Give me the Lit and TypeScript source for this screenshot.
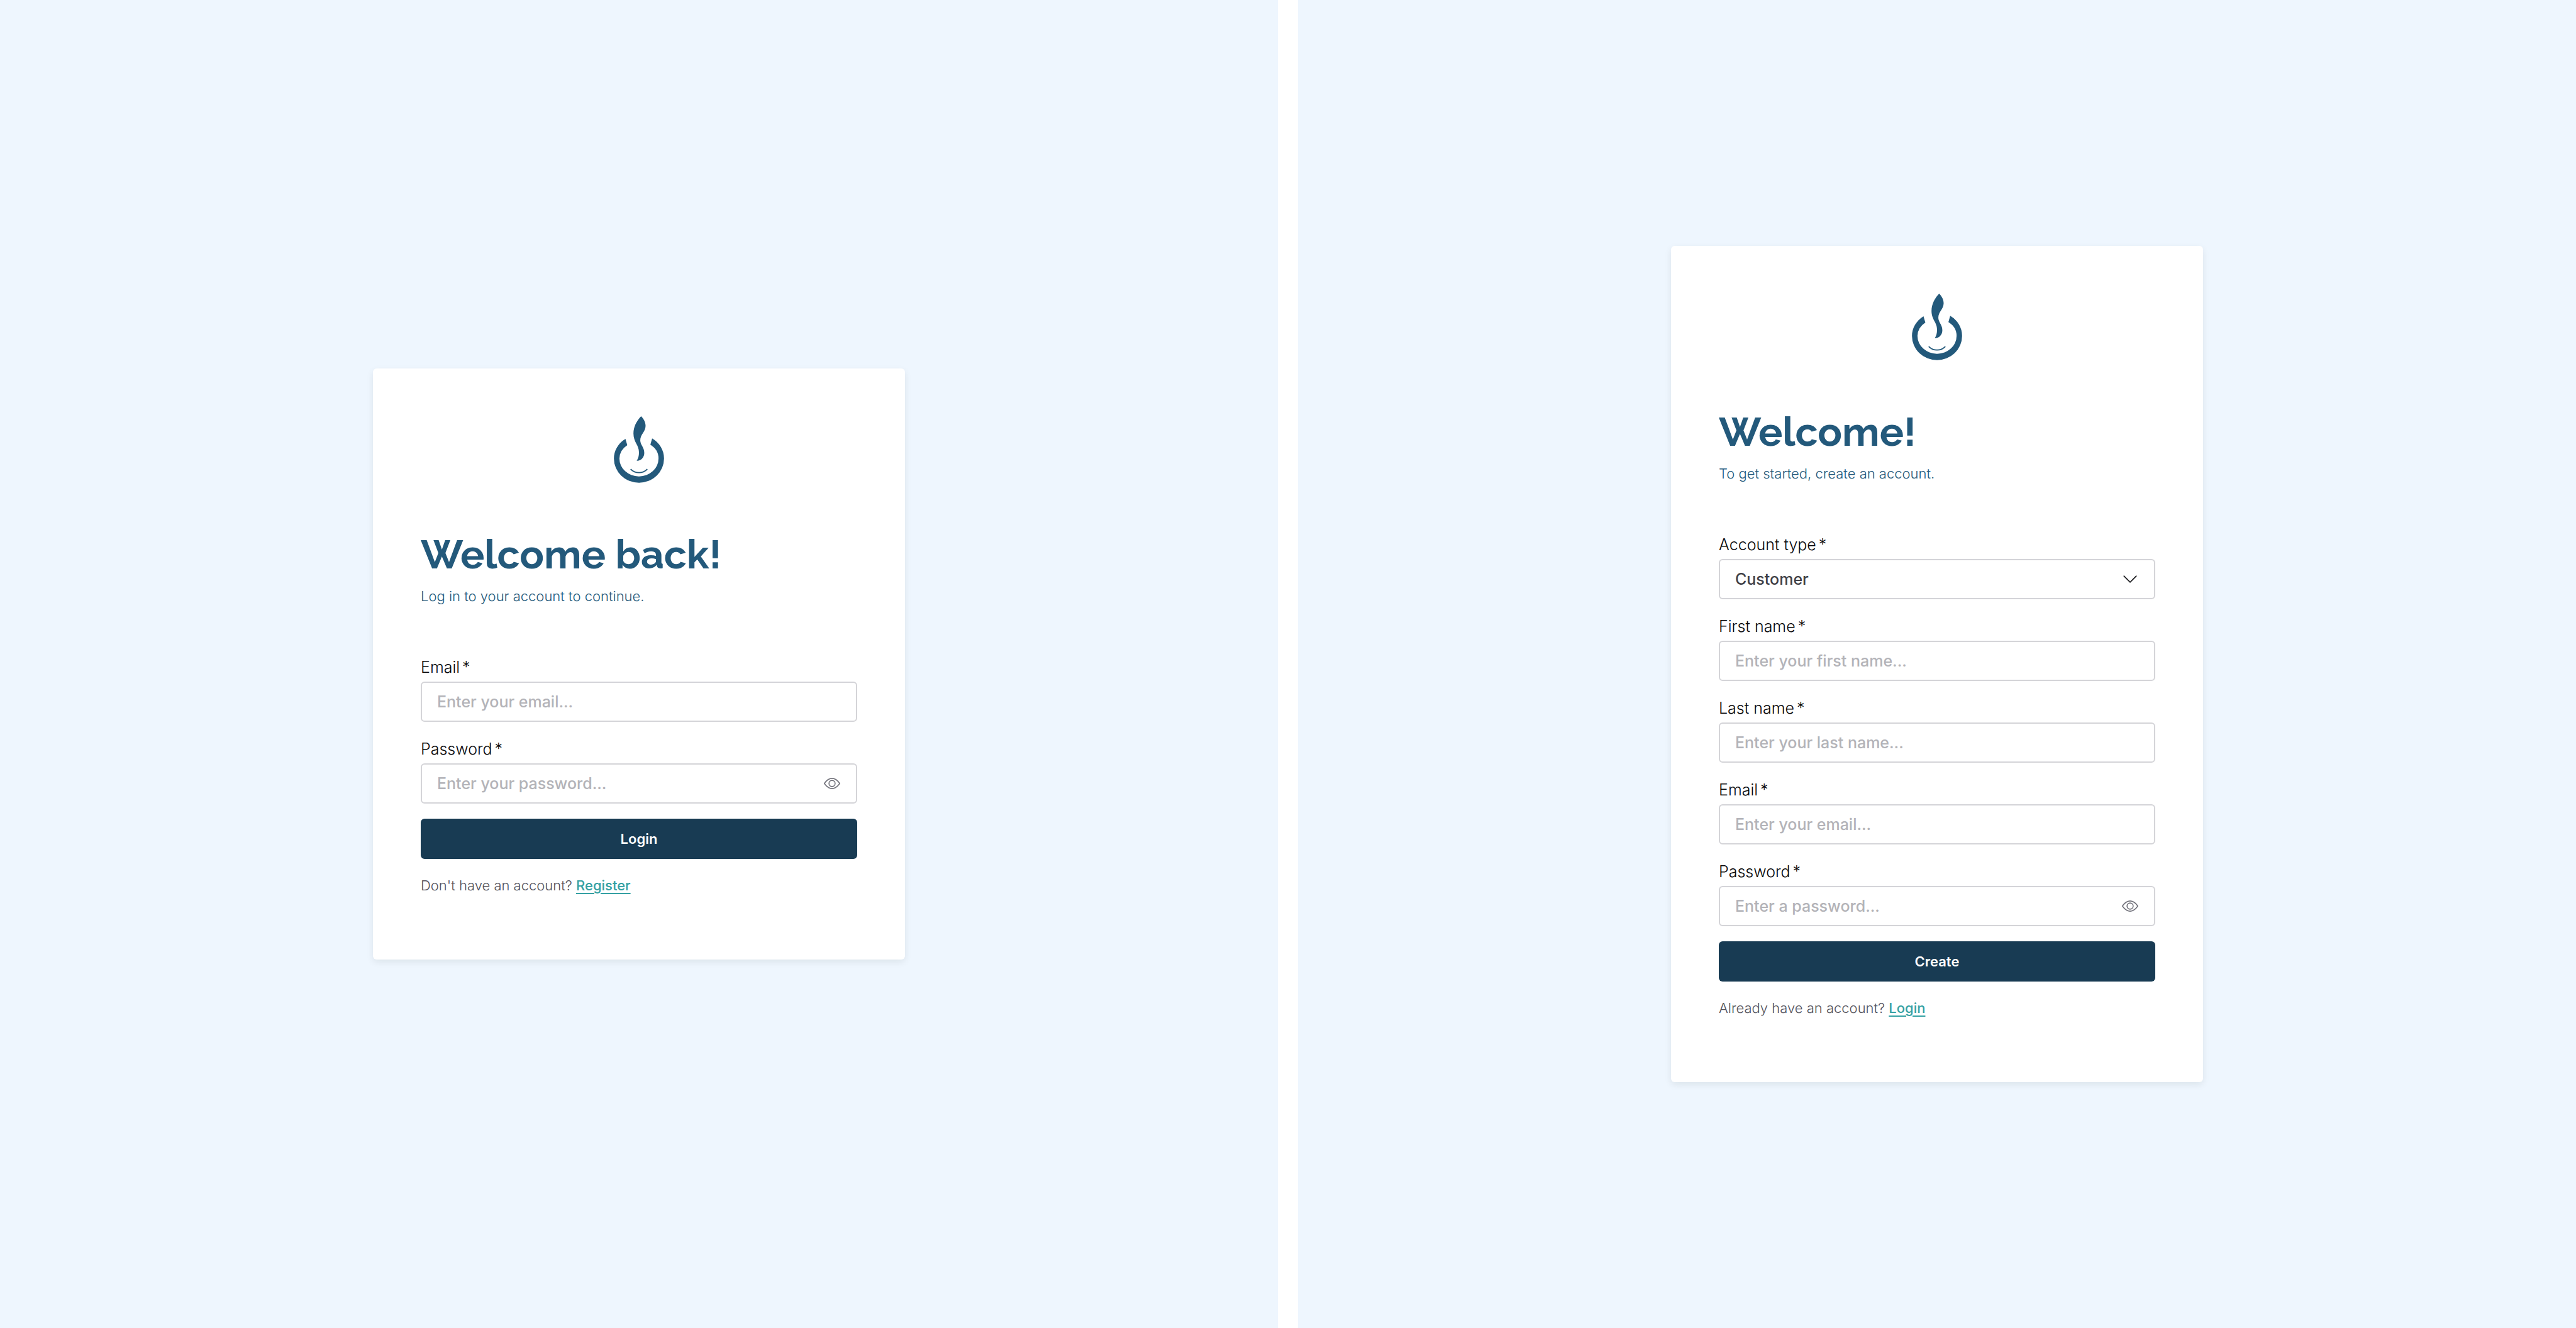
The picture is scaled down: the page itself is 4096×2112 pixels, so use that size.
import { LitElement, html, css, svg, nothing } from "lit";
import { customElement, property, state } from "lit/decorators.js";

const logo = svg`<svg class="logo" viewBox="0 0 100 133" role="img" aria-label="Logo">
  <path d="M54.3 0C60 6 63.2 12 63.2 19C63.2 31 52.6 36 52.6 48C52.6 57 60.6 62 60.6 73C60.6 82 54 89.2 45.5 88.7C48.5 84.5 50 79 50 72C50 57 39 52 39 34.5C39 20 46.5 8 54.3 0Z"/>
  <path d="M23 45.3A50 46.5 0 0 0 0 84.5A50 48.2 0 0 0 50 132.7A50 48.2 0 0 0 100 84.5A50 47 0 0 0 76.3 44.3L72.7 56.7A39 33.5 0 0 1 89 84.5A39 35.5 0 0 1 50 120A39 35.5 0 0 1 11 84.5A39 33.5 0 0 1 26.7 57.7Z"/>
  <path d="M33.4 105.5C42.5 114.8 57.5 114.8 66.6 105.5" fill="none" stroke="currentColor" stroke-width="2.4"/>
</svg>`;

const eye = svg`<svg class="icon" viewBox="0 0 16 16" aria-hidden="true">
  <path d="M16 8s-3-5.5-8-5.5S0 8 0 8s3 5.5 8 5.5S16 8 16 8M1.173 8a13 13 0 0 1 1.66-2.043C4.12 4.668 5.88 3.5 8 3.5s3.879 1.168 5.168 2.457A13 13 0 0 1 14.828 8q-.086.13-.195.288c-.335.48-.83 1.12-1.465 1.755C11.879 11.332 10.119 12.5 8 12.5s-3.879-1.168-5.168-2.457A13 13 0 0 1 1.172 8z"/>
  <path d="M8 5.5a2.5 2.5 0 1 0 0 5 2.5 2.5 0 0 0 0-5M4.5 8a3.5 3.5 0 1 1 7 0 3.5 3.5 0 0 1-7 0"/>
</svg>`;

const chevron = svg`<svg class="icon chevron" viewBox="0 0 16 16" aria-hidden="true">
  <path fill-rule="evenodd" d="M1.646 4.646a.5.5 0 0 1 .708 0L8 10.293l5.646-5.647a.5.5 0 0 1 .708.708l-6 6a.5.5 0 0 1-.708 0l-6-6a.5.5 0 0 1 0-.708"/>
</svg>`;

interface Field {
  name: string;
  label: string;
  type: "text" | "email" | "password" | "select";
  placeholder?: string;
  options?: string[];
}

@customElement("form-field")
class FormField extends LitElement {
  @property({ attribute: false }) field!: Field;
  @state() private revealed = false;

  static styles = css`
    :host {
      display: flex;
      flex-direction: column;
      gap: 4px;
    }
    .label {
      font-size: 25px;
      line-height: 38px;
      font-weight: 300;
      color: #09090b;
    }
    .star {
      margin-left: 4px;
    }
    .box {
      display: flex;
      align-items: center;
      height: 64px;
      box-sizing: border-box;
      border: 2px solid #d4d4d8;
      border-radius: 6px;
      background: #fff;
    }
    .box:focus-within {
      border-color: #23597b;
    }
    .control {
      flex: 1;
      min-width: 0;
      align-self: stretch;
      border: 0;
      outline: 0;
      margin: 0;
      padding: 0 24px;
      background: none;
      appearance: none;
      font: inherit;
      font-size: 25px;
      font-weight: 500;
      color: #3f3f46;
    }
    .select {
      margin-right: -51px;
      padding-right: 75px;
    }
    .control::placeholder {
      color: #b3b3b8;
      opacity: 1;
    }
    .toggle {
      display: flex;
      border: 0;
      margin: 0 25px 0 0;
      padding: 0;
      background: none;
      color: #71717a;
      cursor: pointer;
    }
    .icon {
      display: block;
      width: 26px;
      height: 26px;
      fill: currentColor;
    }
    .chevron {
      margin-right: 25px;
      color: #18181b;
      pointer-events: none;
    }
  `;

  private control() {
    const f = this.field;
    if (f.type === "select") {
      return html`<select class="control select" id="control" name=${f.name} required>
          ${f.options?.map((o) => html`<option>${o}</option>`)}
        </select>
        ${chevron}`;
    }
    const type = f.type === "password" && this.revealed ? "text" : f.type;
    return html`<input
        class="control"
        id="control"
        name=${f.name}
        type=${type}
        placeholder=${f.placeholder ?? ""}
        required
      />
      ${f.type === "password"
        ? html`<button
            class="toggle"
            type="button"
            aria-label="Show password"
            @click=${() => (this.revealed = !this.revealed)}
          >
            ${eye}
          </button>`
        : nothing}`;
  }

  render() {
    return html`<label class="label" for="control"
        >${this.field.label}<span class="star">*</span></label
      >
      <div class="box">${this.control()}</div>`;
  }
}

@customElement("auth-card")
class AuthCard extends LitElement {
  @property() heading = "";
  @property() intro = "";
  @property() action = "";
  @property() question = "";
  @property() link = "";
  @property({ attribute: false }) fields: Field[] = [];

  static styles = css`
    :host {
      display: block;
      box-sizing: border-box;
      width: 100%;
      max-width: 846px;
      padding: 76px 76px 100px;
      border-radius: 6px;
      background: #fff;
      box-shadow: 0 4px 12px rgba(0, 24, 16, 0.08);
    }
    .logo {
      display: block;
      width: 80px;
      height: 106px;
      margin: 0 auto;
      color: #23597b;
      fill: currentColor;
    }
    .heading {
      margin: 76px 0 0;
      font-family: Raleway, Lato, sans-serif;
      font-size: 64px;
      line-height: 76px;
      font-weight: 700;
      color: #23597b;
    }
    .intro {
      margin: 10px 0 0;
      font-size: 22px;
      line-height: 36px;
      font-weight: 300;
      color: #23597b;
    }
    .form {
      display: flex;
      flex-direction: column;
      gap: 24px;
      margin-top: 76px;
    }
    .submit {
      height: 64px;
      border: 0;
      border-radius: 6px;
      background: #183b53;
      color: #fff;
      font: inherit;
      font-size: 22px;
      font-weight: 600;
      cursor: pointer;
    }
    .switch {
      margin: 0;
      font-size: 22px;
      line-height: 36px;
      font-weight: 300;
      color: #52525b;
    }
    .link {
      color: #35a1a3;
      font-weight: 500;
      text-decoration: underline;
      text-decoration-thickness: 2px;
      text-underline-offset: 4px;
    }
  `;

  render() {
    return html`${logo}
      <h1 class="heading">${this.heading}</h1>
      <p class="intro">${this.intro}</p>
      <form class="form" @submit=${(e: Event) => e.preventDefault()}>
        ${this.fields.map((f) => html`<form-field .field=${f}></form-field>`)}
        <button class="submit" type="submit">${this.action}</button>
        <p class="switch">${this.question} <a class="link" href="#">${this.link}</a></p>
      </form>`;
  }
}

const email: Field = {
  name: "email",
  label: "Email",
  type: "email",
  placeholder: "Enter your email...",
};

const loginFields: Field[] = [
  email,
  { name: "password", label: "Password", type: "password", placeholder: "Enter your password..." },
];

const registerFields: Field[] = [
  { name: "type", label: "Account type", type: "select", options: ["Customer"] },
  { name: "first", label: "First name", type: "text", placeholder: "Enter your first name..." },
  { name: "last", label: "Last name", type: "text", placeholder: "Enter your last name..." },
  email,
  { name: "password", label: "Password", type: "password", placeholder: "Enter a password..." },
];

@customElement("app-root")
class AppRoot extends LitElement {
  static styles = css`
    :host {
      display: grid;
      grid-template-columns: 1fr 1fr;
      gap: 32px;
      min-height: 100vh;
      background: #fff;
      font-family: Inter, "Liberation Sans", sans-serif;
    }
    .pane {
      display: flex;
      align-items: center;
      justify-content: center;
      background: #eef6fe;
    }
  `;

  render() {
    return html`<main class="pane">
        <auth-card
          heading="Welcome back!"
          intro="Log in to your account to continue."
          action="Login"
          question="Don't have an account?"
          link="Register"
          .fields=${loginFields}
        ></auth-card>
      </main>
      <section class="pane">
        <auth-card
          heading="Welcome!"
          intro="To get started, create an account."
          action="Create"
          question="Already have an account?"
          link="Login"
          .fields=${registerFields}
        ></auth-card>
      </section>`;
  }
}
